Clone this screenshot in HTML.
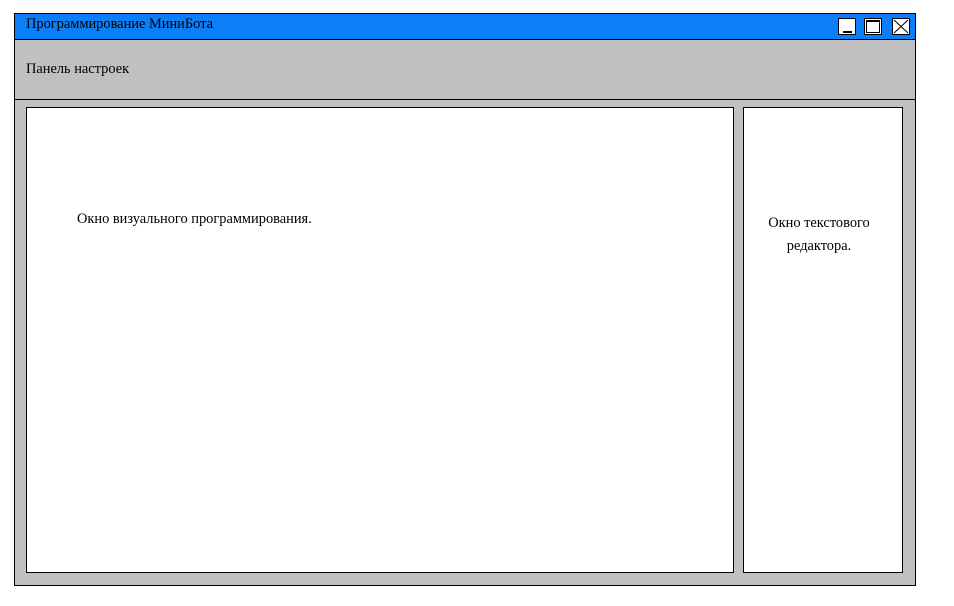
<!DOCTYPE html>
<html><head><meta charset="utf-8"><style>
body{margin:0;width:954px;height:606px;background:#fff;position:relative;font-family:"Liberation Serif",serif;font-size:14.4px;color:#000}
div{position:absolute;box-sizing:border-box}
.b{border:1px solid #000}
.btn{background:#fff;border:1px solid #000;top:18px;width:18px;height:17px}
</style></head><body>
<div class="b" style="left:14px;top:13px;width:902px;height:573px;background:#c0c0c0"></div>
<div class="b" style="left:14px;top:13px;width:902px;height:27px;background:#0a7ff8"></div>
<div style="left:26px;top:16px;white-space:nowrap">Программирование МиниБота</div>
<div class="btn" style="left:838px"><div style="left:4px;top:12px;width:9px;height:2px;background:#000"></div></div>
<div class="btn" style="left:864px"><div class="b" style="left:1px;top:1px;width:14px;height:13px;border-width:2px 1px 1px 1px"></div></div>
<div class="btn" style="left:892px"><svg width="16" height="15" style="position:absolute;left:0;top:0"><path d="M1 1L15 14M15 1L1 14" stroke="#000" stroke-width="1"/></svg></div>
<div style="left:14px;top:99px;width:902px;height:1px;background:#000"></div>
<div style="left:26px;top:61px">Панель настроек</div>
<div class="b" style="left:26px;top:107px;width:708px;height:466px;background:#fff"></div>
<div class="b" style="left:743px;top:107px;width:160px;height:466px;background:#fff"></div>
<div style="left:77px;top:211px;white-space:nowrap">Окно визуального программирования.</div>
<div style="left:739px;top:212px;width:160px;text-align:center;line-height:23px">Окно текстового<br>редактора.</div>
</body></html>
